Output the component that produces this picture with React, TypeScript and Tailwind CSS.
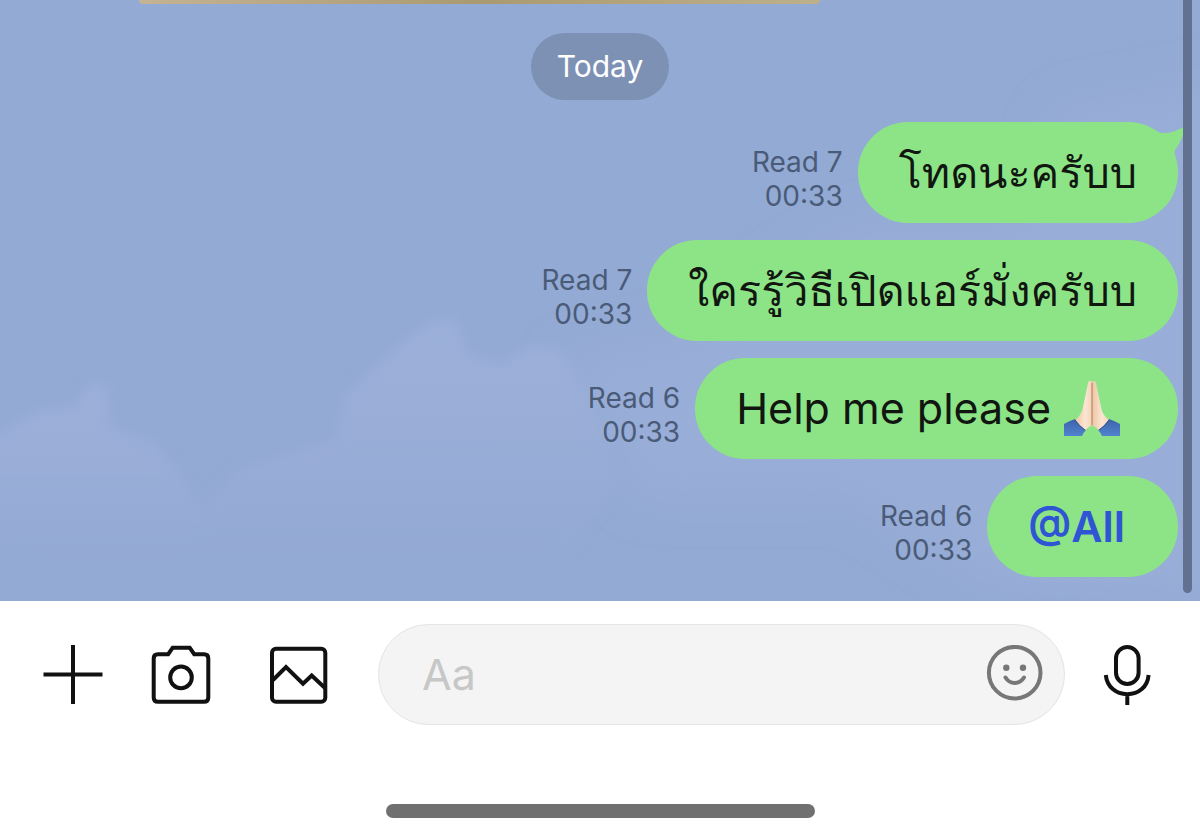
import { useState } from "react";
import type { ReactNode } from "react";

interface Message {
  id: number;
  read: number;
  time: string;
  content: ReactNode;
  tail?: boolean;
}

function PrayingHands() {
  return (
    <svg role="img" aria-label="Folded hands" viewBox="0 1 58 58" className="h-[58px] w-[58px]">
      <defs>
        <linearGradient id="skin" x1="0" x2="1">
          <stop offset="0" stopColor="#ecc4a4" />
          <stop offset="0.6" stopColor="#fbe6d2" />
          <stop offset="1" stopColor="#f3d3b8" />
        </linearGradient>
        <linearGradient id="sleeve" x1="0" x2="0" y1="0" y2="1">
          <stop offset="0" stopColor="#3c62a8" />
          <stop offset="1" stopColor="#5183d0" />
        </linearGradient>
      </defs>
      <path d="M1 45 Q6 42 12 40 L23 51 Q20 54 19 57 H1Z" fill="url(#sleeve)" />
      <path d="M57 45 Q52 42 46 40 L35 51 Q38 54 39 57 H57Z" fill="url(#sleeve)" />
      <path d="M12 41 Q19 36 20 28 Q23 14 25 4 Q26 1 28 2 Q29 3 29 6 V46 Q26 48 22 51 Q17 47 12 41Z" fill="url(#skin)" />
      <path d="M46 41 Q39 36 38 28 Q35 14 33 4 Q32 1 30 2 Q29 3 29 6 V46 Q32 48 36 51 Q41 47 46 41Z" fill="url(#skin)" />
      <path d="M29 4 V46" stroke="#b5805f" strokeWidth="1.1" />
      <path d="M12 41 Q16 47 22 51 M46 41 Q42 47 36 51" stroke="#2f4f92" strokeWidth="1" fill="none" />
    </svg>
  );
}

const messages: Message[] = [
  { id: 1, read: 7, time: "00:33", content: "โทดนะครับบ", tail: true },
  { id: 2, read: 7, time: "00:33", content: "ใครรู้วิธีเปิดแอร์มั่งครับบ" },
  {
    id: 3,
    read: 6,
    time: "00:33",
    content: (
      <span className="flex items-center gap-3 pr-4">
        Help me please <PrayingHands />
      </span>
    ),
  },
  {
    id: 4,
    read: 6,
    time: "00:33",
    content: (
      <a href="#all" className="pr-3 font-semibold text-[#2f55d4]">
        @All
      </a>
    ),
  },
];

function Clouds() {
  return (
    <svg
      aria-hidden="true"
      viewBox="0 0 1200 601"
      preserveAspectRatio="none"
      className="absolute inset-0 h-full w-full"
    >
      <defs>
        <filter id="soft" x="-10%" y="-10%" width="120%" height="120%">
          <feGaussianBlur stdDeviation="6" />
        </filter>
        <filter id="softer" x="-20%" y="-20%" width="140%" height="140%">
          <feGaussianBlur stdDeviation="20" />
        </filter>
        <linearGradient id="cloud" x1="0" x2="0" y1="0" y2="1">
          <stop offset="0" stopColor="#9cb0d9" />
          <stop offset="0.4" stopColor="#99add7" />
          <stop offset="0.85" stopColor="#93aad4" />
        </linearGradient>
      </defs>
      <g filter="url(#softer)" fill="#98add7">
        <path d="M1060 110 L1220 80 L1220 600 L1000 590 L850 500 L640 500 L560 360 L680 330 L860 225 L1010 220Z" />
      </g>
      <g filter="url(#soft)" fill="url(#cloud)">
        <path d="M-20 440 L5 430 L42 410 L74 408 L88 386 L106 384 L108 425 L158 445 L176 470 L200 505 L215 550 L170 580 L80 590 L-20 540Z" />
        <path d="M180 590 L205 505 L240 468 L300 450 L335 440 L345 395 L380 362 L425 325 L455 318 L465 352 L500 365 L530 345 L560 350 L590 400 L620 480 L560 560 L420 600Z" />
      </g>
    </svg>
  );
}

function MessageRow({ message }: { message: Message }) {
  return (
    <li className="flex items-end justify-end gap-[15px]">
      <div className="mb-[10px] text-right text-[28px] leading-[34px] text-[#4a5b78]">
        <p>Read {message.read}</p>
        <p>{message.time}</p>
      </div>
      <div className="relative flex h-[101px] items-center rounded-[50px] bg-[#8de487] px-[41px] text-[43px] whitespace-nowrap text-[#111611]">
        {message.tail && (
          <svg
            aria-hidden="true"
            viewBox="0 0 44 44"
            className="absolute top-0 -right-[7px] h-11 w-11"
            fill="#8de487"
          >
            <path d="M4 4 L20 11 Q32 12 44 4 Q42 18 34 28 L32 40 L4 20Z" />
          </svg>
        )}
        {message.content}
      </div>
    </li>
  );
}

const iconClass = "h-[60px] w-[60px]";

function PlusIcon() {
  return (
    <svg viewBox="0 0 60 60" className={iconClass} fill="none" stroke="#111" strokeWidth="4">
      <path d="M30 0 V59 M0.5 29.5 H59.5" />
    </svg>
  );
}

function CameraIcon() {
  return (
    <svg viewBox="0 0 60 60" className={iconClass} fill="none" stroke="#111" strokeWidth="4">
      <path d="M7 9.2 H17.2 L21.7 2.7 H38.7 L43.2 9.2 H53 Q57.3 9.2 57.3 13.5 V52.5 Q57.3 56.8 53 56.8 H7 Q2.7 56.8 2.7 52.5 V13.5 Q2.7 9.2 7 9.2Z" />
      <circle cx="30" cy="32.4" r="10.8" />
    </svg>
  );
}

function PhotoIcon() {
  return (
    <svg viewBox="0 0 60 60" className={iconClass} fill="none" stroke="#111" strokeWidth="4">
      <rect x="3" y="3.7" width="53.3" height="53" rx="4" />
      <path d="M4 35 L17 22 L34 38.7 L42.7 30.5 L56 43" />
    </svg>
  );
}

function SmileIcon() {
  return (
    <svg viewBox="0 2 60 60" className={iconClass} fill="none" stroke="#777" strokeWidth="4">
      <circle cx="29.7" cy="29.7" r="25.8" />
      <circle cx="21.3" cy="24.7" r="3.2" fill="#777" stroke="none" />
      <circle cx="38" cy="24.7" r="3.2" fill="#777" stroke="none" />
      <path d="M20.5 34.5 Q24 40 29.7 40 Q35.5 40 39 34.5" strokeLinecap="round" />
    </svg>
  );
}

function MicIcon() {
  return (
    <svg viewBox="0 0 60 60" className={iconClass} fill="none" stroke="#111" strokeWidth="4">
      <rect x="19" y="2" width="22.6" height="37" rx="11.3" />
      <path d="M8.8 30 C10 42 19 49.2 30.3 49.2 C41.6 49.2 50.6 42 51.6 30 M30.3 49 V60" />
    </svg>
  );
}

export default function App() {
  const [text, setText] = useState("");

  return (
    <div className="flex min-h-screen flex-col bg-white font-['Inter','Loma','Noto_Sans',sans-serif]">
      <main className="relative flex grow flex-col bg-[#93aad4] pb-6">
        <Clouds />
        <div className="relative mr-[380px] ml-[139px] h-1 rounded-b-full bg-linear-to-r from-[#c4b394] via-[#ab9a70] to-[#bdb08a]" />

        <div className="relative mt-[29px] flex justify-center">
          <time className="rounded-full bg-[#7d91b5] px-[26px] text-[30px] leading-[67px] text-white">
            Today
          </time>
        </div>

        <ul className="relative mt-[22px] flex flex-col gap-[17px] pr-[22px]">
          {messages.map((message) => (
            <MessageRow key={message.id} message={message} />
          ))}
        </ul>

        <div className="absolute top-0 right-2 bottom-2 w-[9px] rounded-b-full bg-[#62718f]" />
      </main>

      <footer className="pt-[23px] pb-[21px]">
        <form className="flex items-center px-[43px]" onSubmit={(e) => e.preventDefault()}>
          <button type="button" aria-label="Add">
            <PlusIcon />
          </button>
          <button type="button" aria-label="Camera" className="ml-12">
            <CameraIcon />
          </button>
          <button type="button" aria-label="Photos" className="ml-[58px]">
            <PhotoIcon />
          </button>
          <div className="mr-8 ml-[49px] flex h-[101px] min-w-0 grow items-center rounded-full border border-[#e4e4e4] bg-[#f4f4f4] pr-[19px] pl-[43px]">
            <input
              type="text"
              aria-label="Message"
              placeholder="Aa"
              value={text}
              onChange={(e) => setText(e.target.value)}
              className="min-w-0 grow bg-transparent text-[43px] text-[#111] outline-none placeholder:text-[#c7c7c7]"
            />
            <button type="button" aria-label="Stickers">
              <SmileIcon />
            </button>
          </div>
          <button type="button" aria-label="Record voice">
            <MicIcon />
          </button>
        </form>
        <div className="mx-auto mt-[79px] h-[14px] w-[429px] max-w-full rounded-full bg-[#707070]" />
      </footer>
    </div>
  );
}
